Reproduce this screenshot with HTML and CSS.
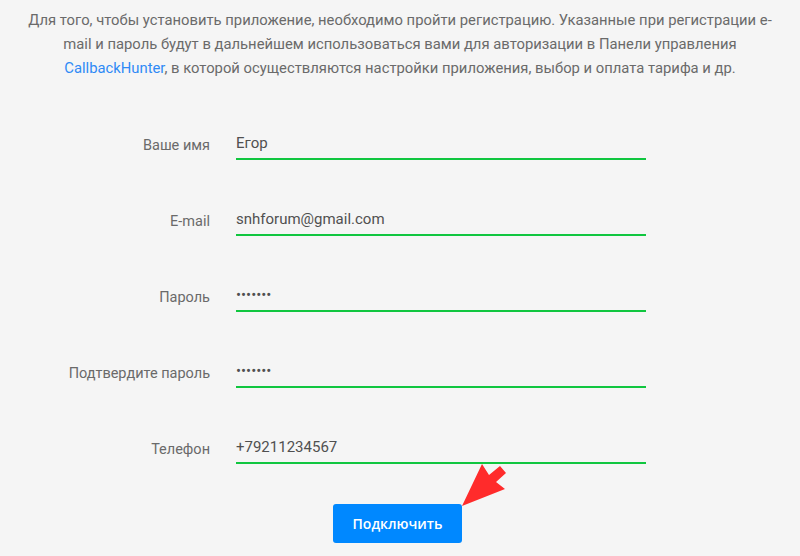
FILE: index.html
```html
<!DOCTYPE html>
<html lang="ru">
  <head>
    <meta charset="UTF-8" />
    <meta name="viewport" content="width=device-width, initial-scale=1.0" />
    <title>Регистрация</title>
    <link rel="stylesheet" href="styles.css">
  </head>
  <body>
    <div class="page">
      <p class="intro">
        Для того, чтобы установить приложение, необходимо пройти регистрацию. Указанные при регистрации e-mail и пароль будут в дальнейшем использоваться вами для авторизации в Панели управления <a href="#">CallbackHunter</a>, в которой осуществляются настройки приложения, выбор и оплата тарифа и др.
      </p>
      <form class="reg-form">
        <div class="form-row">
          <label for="name">Ваше имя</label>
          <input type="text" id="name" value="Егор" />
        </div>
        <div class="form-row">
          <label for="email">E-mail</label>
          <input type="text" id="email" value="snhforum@gmail.com" />
        </div>
        <div class="form-row">
          <label for="pass">Пароль</label>
          <input type="text" id="pass" class="secret" value="•••••••" />
        </div>
        <div class="form-row">
          <label for="pass2">Подтвердите пароль</label>
          <input type="text" id="pass2" class="secret" value="•••••••" />
        </div>
        <div class="form-row">
          <label for="phone">Телефон</label>
          <input type="text" id="phone" value="+79211234567" />
        </div>
        <div class="actions">
          <button type="button">Подключить</button>
          <!-- red pointer from the screenshot -->
          <svg class="pointer" width="50" height="50" viewBox="0 0 50 50">
            <polygon points="2,44 22,2 29,13 40,4 46,11 36,20 45,27" fill="#ff2b2b" />
          </svg>
        </div>
      </form>
    </div>
  </body>
</html>
```

FILE: styles.css
```css
body {
  margin: 0;
  background-color: #f5f5f5;
  color: #6a6a6a;
  font-family: Roboto, "Liberation Sans", Arial, sans-serif;
}
.page {
  width: 800px;
  height: 556px;
  overflow: hidden;
}
.intro {
  margin: 0 auto;
  padding-top: 8px;
  width: 760px;
  font-size: 14.8px;
  line-height: 24px;
  text-align: center;
}
.intro a {
  color: #2f8af5;
  text-decoration: none;
}
.reg-form {
  margin-top: 50px;
}
.form-row {
  display: grid;
  grid-template-columns: 210px 410px;
  column-gap: 26px;
  align-items: center;
  margin-bottom: 46px;
}
.form-row label {
  text-align: right;
  font-size: 14.5px;
  color: #6a6a6a;
}
.form-row input {
  box-sizing: border-box;
  height: 30px;
  padding: 0 0 2px 0;
  border: none;
  border-bottom: 2px solid #10c63f;
  background: transparent;
  font-family: Roboto, "Liberation Sans", Arial, sans-serif;
  font-size: 15px;
  color: #505050;
  outline: none;
}
.form-row input.secret {
  font-size: 15px;
  letter-spacing: 0;
}
.actions {
  position: relative;
  display: flex;
  justify-content: center;
  margin-top: -6px;
  padding-right: 5px;
}
.actions button {
  width: 129px;
  height: 39px;
  border: none;
  border-radius: 3px;
  background-color: #0088ff;
  color: #fff;
  font-family: "Open Sans", Roboto, sans-serif;
  font-size: 14px;
  font-weight: 600;
  cursor: pointer;
}
.pointer {
  position: absolute;
  left: 460px;
  top: -42px;
}
```
